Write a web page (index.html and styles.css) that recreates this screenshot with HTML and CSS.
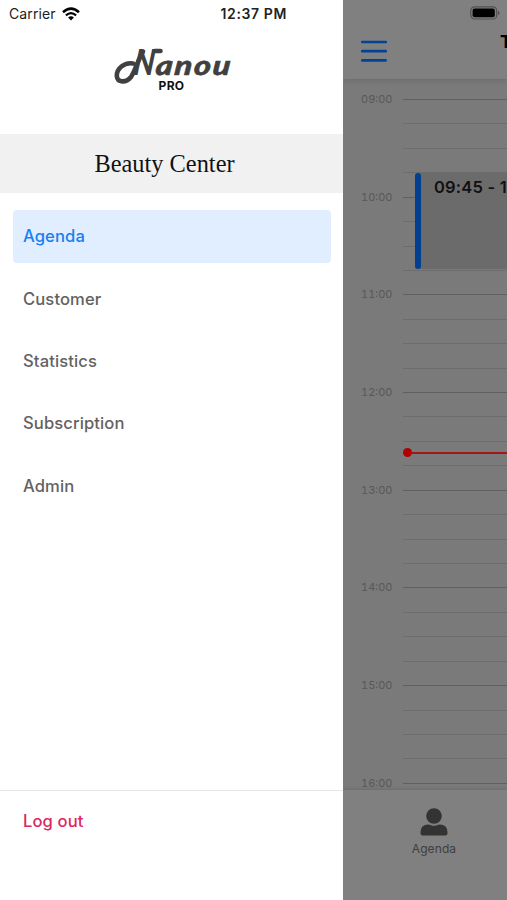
FILE: index.html
```
<!DOCTYPE html>
<html lang="en">
<head>
    <meta charset="UTF-8">
    <meta name="viewport" content="width=device-width, initial-scale=1.0">
    <title>Nanou PRO</title>
    <link rel="stylesheet" href="styles.css">
</head>
<body>

<!-- Side menu -->
<aside class="side-menu">
    <div class="status-bar">
        <span class="carrier">Carrier</span>
        <svg class="wifi" width="18" height="14" viewBox="0 0 18 14">
            <path d="M1 5.2 Q9 -2 17 5.2" fill="none" stroke="#000" stroke-width="2.5"/>
            <path d="M3.9 8.3 Q9 3.9 14.1 8.3" fill="none" stroke="#000" stroke-width="2.2"/>
            <path d="M6.1 10.4 Q9 7.9 11.9 10.4 L9 13.4 Z" fill="#000"/>
        </svg>
        <span class="clock">12:37 PM</span>
    </div>

    <div class="logo">
        <div class="logo-name">
            <svg class="swash" width="52" height="40" viewBox="0 0 52 40">
                <path d="M20 17.5 C11 16 3.5 23 3.8 30 C4.5 37 13 37 18 31 C22 25 25 14 30 5.5 M41.5 5 H47.5" fill="none" stroke="#404040" stroke-width="4.6" stroke-linecap="round"/>
            </svg>
            <span class="logo-n">N</span><span class="logo-rest">anou</span>
        </div>
        <div class="logo-pro">PRO</div>
    </div>

    <h1 class="shop-name">Beauty Center</h1>

    <nav class="menu">
        <a class="menu-item active">Agenda</a>
        <a class="menu-item">Customer</a>
        <a class="menu-item">Statistics</a>
        <a class="menu-item">Subscription</a>
        <a class="menu-item">Admin</a>
    </nav>

    <div class="menu-footer">
        <a class="logout">Log out</a>
    </div>
</aside>

<!-- Agenda behind the menu -->
<main class="agenda">
    <header class="topbar">
        <svg class="battery" width="30" height="14" viewBox="0 0 30 14">
            <rect x="0.8" y="0.8" width="25.9" height="12.2" rx="3.8" fill="none" stroke="#505050" stroke-width="1.2"/>
            <rect x="2.6" y="2.6" width="22.2" height="8.7" rx="2" fill="#000"/>
            <path d="M28 4.8 Q31 7 28 9.2 Z" fill="#505050"/>
        </svg>
        <div class="toolbar">
            <svg class="burger" width="26" height="23" viewBox="0 0 26 23">
                <path d="M1.3 2H24.7M1.3 11.2H24.7M1.3 20.4H24.7" stroke="#004397" stroke-width="2.7" stroke-linecap="round"/>
            </svg>
            <span class="title">Today</span>
        </div>
    </header>

    <section class="calendar">
        <div class="hour"><span>09:00</span><div class="slots"><i></i><i></i><i></i><i></i></div></div>
        <div class="hour"><span>10:00</span><div class="slots"><i></i><i></i><i></i><i></i></div></div>
        <div class="hour"><span>11:00</span><div class="slots"><i></i><i></i><i></i><i></i></div></div>
        <div class="hour"><span>12:00</span><div class="slots"><i></i><i></i><i></i><i></i></div></div>
        <div class="hour"><span>13:00</span><div class="slots"><i></i><i></i><i></i><i></i></div></div>
        <div class="hour"><span>14:00</span><div class="slots"><i></i><i></i><i></i><i></i></div></div>
        <div class="hour"><span>15:00</span><div class="slots"><i></i><i></i><i></i><i></i></div></div>
        <div class="hour"><span>16:00</span><div class="slots"><i></i><i></i><i></i><i></i></div></div>
        <div class="event">09:45 - 10:45</div>
        <div class="now-line"></div>
    </section>

    <footer class="tabbar">
        <div class="tab">
            <svg width="28" height="28" viewBox="0 0 28 28" fill="#333">
                <circle cx="14" cy="8" r="7.8"/>
                <path d="M7.5 16.5 Q10 16.5 11 17.2 Q14 18.4 17 17.2 Q18 16.5 20.5 16.5 Q27.5 17 27.5 24.5 V25.5 Q27.5 27.5 25.3 27.5 H2.7 Q0.5 27.5 0.5 25.5 V24.5 Q0.5 17 7.5 16.5 Z"/>
            </svg>
            <span>Agenda</span>
        </div>
    </footer>
</main>

</body>
</html>
```

FILE: styles.css
```
* {
    box-sizing: border-box;
}
body {
    margin: 0;
    height: 900px;
    display: flex;
    overflow: hidden;
    font-family: Inter, "Liberation Sans", sans-serif;
    background: #fff;
}

/* Side menu */
.side-menu {
    flex: 0 0 343px;
    display: flex;
    flex-direction: column;
    background: #fff;
}
.status-bar {
    height: 27px;
    padding-left: 9px;
    display: flex;
    align-items: center;
    font-size: 14px;
    letter-spacing: 0.1px;
    color: #222;
}
.wifi {
    margin-left: 6px;
}
.clock {
    margin-left: 141px;
    font-weight: 600;
    letter-spacing: 0.6px;
    white-space: nowrap;
}
.logo {
    height: 107px;
    padding-top: 18px;
    text-align: center;
    color: #404040;
}
.logo-name {
    position: relative;
    height: 34px;
    display: flex;
    align-items: baseline;
    padding-left: 133px;
    font-family: Lato, sans-serif;
    font-weight: 900;
    font-style: italic;
    line-height: 33px;
}
.swash {
    position: absolute;
    left: 113px;
    top: 1px;
}
.logo-n {
    margin-right: -4px;
    font-size: 36px;
    transform: scaleX(0.8) skewX(-8deg);
    transform-origin: 0 85%;
}
.logo-rest {
    font-size: 27px;
    letter-spacing: 1.4px;
    transform: scaleX(1.2) skewX(-5deg);
    transform-origin: 0 85%;
    -webkit-text-stroke: 0.5px #404040;
}
.logo-pro {
    font-size: 12px;
    line-height: 14px;
    font-weight: 700;
    letter-spacing: 0.3px;
    color: #111;
}
.shop-name {
    height: 59px;
    margin: 0;
    padding-right: 14px;
    background: #f1f1f1;
    font-family: "Liberation Serif", serif;
    font-size: 24.4px;
    font-weight: 400;
    line-height: 60px;
    text-align: center;
    color: #111;
}
.menu {
    flex: 1;
    display: flex;
    flex-direction: column;
    gap: 10px;
    padding: 17.4px 12px 0 13px;
}
.menu-item {
    height: 52.3px;
    padding-left: 10px;
    border-radius: 4px;
    font-size: 16.6px;
    font-weight: 500;
    line-height: 52px;
    letter-spacing: 0.1px;
    color: #626262;
}
.menu-item.active {
    background: #e0eeff;
    color: #1580f5;
}
.menu-footer {
    height: 110px;
    padding: 20px 23px;
    border-top: 1px solid #e6e6e6;
}
.logout {
    font-size: 16.6px;
    font-weight: 500;
    letter-spacing: 0.1px;
    color: #dc2860;
}

/* Dimmed agenda */
.agenda {
    flex: 1;
    min-width: 0;
    display: flex;
    flex-direction: column;
    overflow: hidden;
    background: #808080;
}
.topbar {
    position: relative;
    z-index: 1;
    height: 79px;
    padding-top: 6px;
    box-shadow: 0 1px 6px rgba(0, 0, 0, 0.15);
    background: #808080;
}
.battery {
    display: block;
    margin-left: 127px;
}
.toolbar {
    display: flex;
    padding: 20px 0 0 18px;
}
.burger {
    flex-shrink: 0;
    margin-right: 113px;
}
.title {
    margin-top: -10px;
    font-size: 18px;
    font-weight: 700;
    line-height: 24px;
    color: #000;
}
.calendar {
    position: relative;
    flex: 1;
    min-height: 0;
    padding-top: 20px;
    overflow: hidden;
    background: #7a7a7a;
}
.hour {
    display: flex;
    height: 97.7px;
}
.hour span {
    width: 60px;
    padding-left: 18px;
    margin-top: -8px;
    font-size: 11px;
    font-variant-numeric: tabular-nums;
    line-height: 17px;
    color: #585858;
}
.slots {
    flex: 1;
    display: grid;
    grid-template-rows: repeat(4, 1fr);
}
.slots i {
    border-top: 1px solid #6d6d6d;
}
.slots i:first-child {
    border-color: #606060;
}
.event {
    position: absolute;
    left: 72px;
    right: 0;
    top: 94px;
    height: 96px;
    padding-left: 19px;
    border-radius: 3px 0 0 3px;
    background: #6b6b6b;
    font-size: 16.5px;
    font-weight: 600;
    line-height: 29px;
    letter-spacing: 0.2px;
    white-space: nowrap;
    color: #111;
}
.event::before {
    content: "";
    position: absolute;
    left: 0;
    top: 0;
    width: 6px;
    height: 96px;
    border-radius: 3px;
    background: #003f91;
}
.now-line {
    position: absolute;
    left: 64px;
    right: 0;
    top: 373px;
    height: 2px;
    background: #a01818;
}
.now-line::before {
    content: "";
    position: absolute;
    left: -4px;
    top: -4px;
    width: 9px;
    height: 9px;
    border-radius: 50%;
    background: #b00000;
}
.tabbar {
    position: relative;
    height: 110px;
    padding: 18px 0 0 51px;
    background: #808080;
    box-shadow: 0 -1px 3px rgba(0, 0, 0, 0.12);
}
.tab {
    width: 80px;
    display: flex;
    flex-direction: column;
    align-items: center;
    font-size: 12px;
    line-height: 16px;
    letter-spacing: 0.1px;
    color: #3e3e3e;
}
.tab span {
    margin-top: 5px;
}
```
